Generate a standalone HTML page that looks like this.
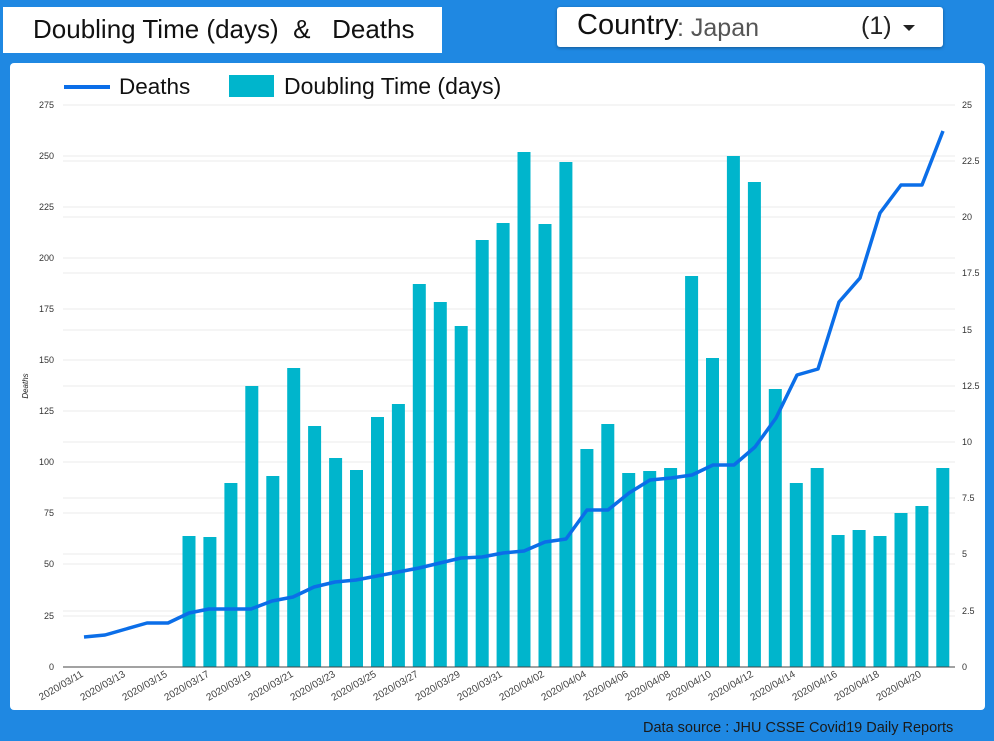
<!DOCTYPE html>
<html><head><meta charset="utf-8"><style>
body{margin:0;width:994px;height:741px;background:#1f88e2;position:relative;overflow:hidden;font-family:"Liberation Sans",sans-serif}
.t{position:absolute;left:3px;top:7px;width:439px;height:46px;background:#fff}
.t span{position:absolute;left:30px;top:7px;font-size:26px;color:#111;letter-spacing:0px}
.c{position:absolute;left:557px;top:7px;width:386px;height:40px;background:#fff;border-radius:3px;box-shadow:0 1px 3px rgba(0,0,0,.35)}
.card{position:absolute;left:10px;top:63px;width:975px;height:647px;background:#fff;border-radius:4px}
.ds{position:absolute;left:643px;top:720px;font-size:14.5px;color:#1a1a1a}
</style></head><body>
<div class="t"><span>Doubling Time (days) &nbsp;&amp;&nbsp;&nbsp; Deaths</span></div>
<div class="c"><span style="position:absolute;left:20px;top:2px;font-size:29px;color:#111">Country</span><span style="position:absolute;left:120px;top:7px;font-size:25px;color:#555">: Japan</span><span style="position:absolute;left:304px;top:5px;font-size:25px;color:#222">(1)</span><span style="position:absolute;left:346px;top:18px;border-left:6px solid transparent;border-right:6px solid transparent;border-top:6px solid #222;width:0;height:0"></span></div>
<div class="card"></div>
<svg width="994" height="741" style="position:absolute;left:0;top:0" font-family="Liberation Sans, sans-serif">
<line x1="64" y1="87" x2="110" y2="87" stroke="#0b6ee8" stroke-width="4"/>
<text x="119" y="94" font-size="22.5" fill="#111">Deaths</text>
<rect x="229" y="75" width="45" height="22" fill="#00b5cc"/>
<text x="284" y="94" font-size="23" fill="#111">Doubling Time (days)</text>
<g stroke="#ebebeb" stroke-width="1">
<line x1="63" y1="105" x2="955" y2="105"/><line x1="63" y1="156" x2="955" y2="156"/><line x1="63" y1="207" x2="955" y2="207"/><line x1="63" y1="258" x2="955" y2="258"/><line x1="63" y1="309" x2="955" y2="309"/><line x1="63" y1="360" x2="955" y2="360"/><line x1="63" y1="411" x2="955" y2="411"/><line x1="63" y1="462" x2="955" y2="462"/><line x1="63" y1="513" x2="955" y2="513"/><line x1="63" y1="564" x2="955" y2="564"/><line x1="63" y1="616" x2="955" y2="616"/>
<line x1="63" y1="161" x2="955" y2="161"/><line x1="63" y1="217" x2="955" y2="217"/><line x1="63" y1="273" x2="955" y2="273"/><line x1="63" y1="330" x2="955" y2="330"/><line x1="63" y1="386" x2="955" y2="386"/><line x1="63" y1="442" x2="955" y2="442"/><line x1="63" y1="498" x2="955" y2="498"/><line x1="63" y1="554" x2="955" y2="554"/><line x1="63" y1="611" x2="955" y2="611"/>
</g>
<g font-size="9" fill="#333" text-anchor="end">
<text x="54" y="108">275</text><text x="54" y="159">250</text><text x="54" y="210">225</text><text x="54" y="261">200</text><text x="54" y="312">175</text><text x="54" y="363">150</text><text x="54" y="414">125</text><text x="54" y="465">100</text><text x="54" y="516">75</text><text x="54" y="567">50</text><text x="54" y="619">25</text><text x="54" y="670">0</text>
</g>
<g font-size="9" fill="#333">
<text x="962" y="108">25</text><text x="962" y="164">22.5</text><text x="962" y="220">20</text><text x="962" y="276">17.5</text><text x="962" y="333">15</text><text x="962" y="389">12.5</text><text x="962" y="445">10</text><text x="962" y="501">7.5</text><text x="962" y="557">5</text><text x="962" y="614">2.5</text><text x="962" y="670">0</text>
</g>
<text transform="translate(28,386) rotate(-90)" font-size="8" font-style="italic" fill="#222" text-anchor="middle">Deaths</text>
<g fill="#00b5cc">
<rect x="182.5" y="536" width="13" height="131"/><rect x="203.4" y="537" width="13" height="130"/><rect x="224.4" y="483" width="13" height="184"/><rect x="245.3" y="386" width="13" height="281"/><rect x="266.3" y="476" width="13" height="191"/><rect x="287.2" y="368" width="13" height="299"/><rect x="308.1" y="426" width="13" height="241"/><rect x="329.1" y="458" width="13" height="209"/><rect x="350" y="470" width="13" height="197"/><rect x="371" y="417" width="13" height="250"/><rect x="391.9" y="404" width="13" height="263"/><rect x="412.8" y="284" width="13" height="383"/><rect x="433.8" y="302" width="13" height="365"/><rect x="454.7" y="326" width="13" height="341"/><rect x="475.7" y="240" width="13" height="427"/><rect x="496.6" y="223" width="13" height="444"/><rect x="517.5" y="152" width="13" height="515"/><rect x="538.5" y="224" width="13" height="443"/><rect x="559.4" y="162" width="13" height="505"/><rect x="580.4" y="449" width="13" height="218"/><rect x="601.3" y="424" width="13" height="243"/><rect x="622.2" y="473" width="13" height="194"/><rect x="643.2" y="471" width="13" height="196"/><rect x="664.1" y="468" width="13" height="199"/><rect x="685.1" y="276" width="13" height="391"/><rect x="706" y="358" width="13" height="309"/><rect x="726.9" y="156" width="13" height="511"/><rect x="747.9" y="182" width="13" height="485"/><rect x="768.8" y="389" width="13" height="278"/><rect x="789.8" y="483" width="13" height="184"/><rect x="810.7" y="468" width="13" height="199"/><rect x="831.6" y="535" width="13" height="132"/><rect x="852.6" y="530" width="13" height="137"/><rect x="873.5" y="536" width="13" height="131"/><rect x="894.5" y="513" width="13" height="154"/><rect x="915.4" y="506" width="13" height="161"/><rect x="936.3" y="468" width="13" height="199"/>
</g>
<line x1="63" y1="667" x2="955" y2="667" stroke="#444" stroke-width="1"/>
<polyline fill="none" stroke="#0b6ee8" stroke-width="3.5" stroke-linejoin="round" points="84,637 105,635 126,629 147,623 168,623 189,613 209,609 230,609 251,609 272,601 293,597 314,587 335,582 356,580 377,576 398,572 419,568 440,563 461,558 482,557 503,553 524,551 545,542 566,539 587,510 608,510 629,493 650,480 671,478 692,475 713,465 734,465 755,447 776,418 797,375 818,369 839,302 860,278 880,213 901,185 922,185 943,131"/>
<g font-size="10" fill="#444" text-anchor="end">
<text transform="translate(84,676) rotate(-30)">2020/03/11</text><text transform="translate(126,676) rotate(-30)">2020/03/13</text><text transform="translate(168,676) rotate(-30)">2020/03/15</text><text transform="translate(210,676) rotate(-30)">2020/03/17</text><text transform="translate(252,676) rotate(-30)">2020/03/19</text><text transform="translate(294,676) rotate(-30)">2020/03/21</text><text transform="translate(336,676) rotate(-30)">2020/03/23</text><text transform="translate(377,676) rotate(-30)">2020/03/25</text><text transform="translate(419,676) rotate(-30)">2020/03/27</text><text transform="translate(461,676) rotate(-30)">2020/03/29</text><text transform="translate(503,676) rotate(-30)">2020/03/31</text><text transform="translate(545,676) rotate(-30)">2020/04/02</text><text transform="translate(587,676) rotate(-30)">2020/04/04</text><text transform="translate(629,676) rotate(-30)">2020/04/06</text><text transform="translate(671,676) rotate(-30)">2020/04/08</text><text transform="translate(712,676) rotate(-30)">2020/04/10</text><text transform="translate(754,676) rotate(-30)">2020/04/12</text><text transform="translate(796,676) rotate(-30)">2020/04/14</text><text transform="translate(838,676) rotate(-30)">2020/04/16</text><text transform="translate(880,676) rotate(-30)">2020/04/18</text><text transform="translate(922,676) rotate(-30)">2020/04/20</text>
</g>
</svg>
<div class="ds">Data source : JHU CSSE Covid19 Daily Reports</div>
</body></html>
